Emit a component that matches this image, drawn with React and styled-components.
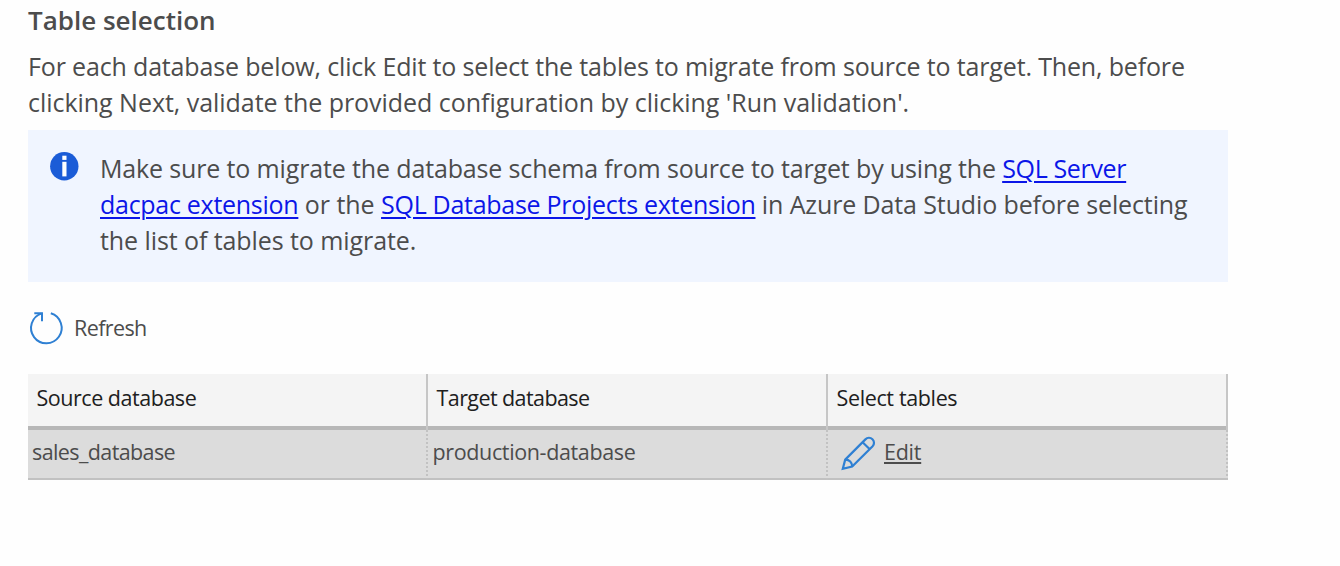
import React from "react";
import styled, { createGlobalStyle } from "styled-components";

const Global = createGlobalStyle`
  * { box-sizing: border-box; }
  body {
    margin: 0;
    background: #fefefe;
    color: #4c4c4c;
    font-family: "Open Sans", "Noto Sans", sans-serif;
  }
`;

const Page = styled.main`
  width: 1228px;
  height: 566px;
  padding: 2px 0 0 28px;
`;

const Heading = styled.h2`
  margin: 0;
  font-size: 26px;
  line-height: 36px;
  font-weight: 600;
  white-space: nowrap;
`;

const Description = styled.p`
  margin: 10px 0;
  font-size: 25px;
  line-height: 36px;
`;

const Line = styled.span`
  display: block;
  white-space: nowrap;
`;

const Run = styled.span`
  letter-spacing: ${(p) => p.$tracking || 0}px;
`;

const Link = styled.a`
  color: #0b16e8;
  letter-spacing: ${(p) => p.$tracking || 0}px;
  text-decoration: underline;
  text-decoration-thickness: 2px;
  text-underline-offset: 3px;
`;

const Note = styled.section`
  display: flex;
  align-items: flex-start;
  gap: 21px;
  height: 152px;
  padding: 20px 0 0 22px;
  background: #f0f5ff;
`;

const NoteIcon = styled.svg`
  flex: none;
  width: 29px;
  height: 29px;
  margin-top: 2px;
`;

const NoteText = styled.p`
  margin: 0;
  font-size: 25px;
  line-height: 36px;
`;

const RefreshButton = styled.button`
  display: flex;
  align-items: center;
  gap: 8px;
  height: 36px;
  margin: 28px 0 28px;
  padding: 0;
  border: 0;
  background: none;
  color: inherit;
  font: 21.5px/36px "Open Sans", "Noto Sans", sans-serif;
  letter-spacing: -0.6px;
`;

const RefreshIcon = styled.svg`
  width: 38px;
  height: 38px;
`;

const Grid = styled.div`
  display: grid;
  grid-template-columns: repeat(3, 400px);
  font-size: 21.5px;
`;

const HeaderCell = styled.div`
  height: 56px;
  padding: 6px 0 0 8.5px;
  line-height: 36px;
  color: #202020;
  background:
    linear-gradient(#b7b7b7, #b7b7b7) bottom / 100% 4px no-repeat,
    #f4f4f4;
  border-right: 2px solid #c6c6c6;
  letter-spacing: ${(p) => p.$tracking}px;
`;

const Cell = styled.div`
  display: flex;
  align-items: flex-start;
  height: 50px;
  padding: 4px 0 0 ${(p) => p.$inset || 4}px;
  line-height: 36px;
  background: #dcdcdc;
  box-shadow: inset 0 -2px #c1c1c1;
  border-right: 2px dotted #c2c2c2;
  letter-spacing: ${(p) => p.$tracking || 0}px;
`;

const PencilIcon = styled.svg`
  width: 36px;
  height: 36px;
  margin: 2px 8px 0 0;
`;

const EditLink = styled.a`
  color: inherit;
  letter-spacing: -0.25px;
  text-decoration: underline;
  text-decoration-thickness: 2px;
  text-underline-offset: 2px;
`;

const columns = [
  { title: "Source database", tracking: -0.47 },
  { title: "Target database", tracking: -0.58 },
  { title: "Select tables", tracking: -0.36 },
];

export default function App() {
  return (
    <>
      <Global />
      <Page>
        <Heading>Table selection</Heading>
        <Description>
          <Line>
            <Run $tracking={-0.155}>
              For each database below, click Edit to select the tables to migrate from source to target. Then, before
            </Run>
          </Line>
          <Line>
            <Run $tracking={-0.035}>
              clicking Next, validate the provided configuration by clicking 'Run validation'.
            </Run>
          </Line>
        </Description>
        <Note>
          <NoteIcon viewBox="0 0 29 29">
            <circle cx="14.3" cy="14.3" r="14.2" fill="#1b5cd7" />
            <rect x="12.3" y="3.7" width="4.2" height="4.2" fill="#fff" />
            <rect x="12.3" y="9.8" width="4.2" height="14.6" fill="#fff" />
          </NoteIcon>
          <NoteText>
            <Line>
              <Run $tracking={-0.144}>Make sure to migrate the database schema from source to target by using the </Run>
              <Link $tracking={-0.34}>SQL Server</Link>
            </Line>
            <Line>
              <Link $tracking={-0.28}>dacpac extension</Link>
              <Run $tracking={-0.04}> or the </Run>
              <Link $tracking={-0.28}>SQL Database Projects extension</Link>
              <Run $tracking={-0.12}> in Azure Data Studio before selecting</Run>
            </Line>
            <Line>
              <Run $tracking={-0.08}>the list of tables to migrate.</Run>
            </Line>
          </NoteText>
        </Note>
        <RefreshButton>
          <RefreshIcon viewBox="0 0 38 38" fill="none" stroke="#2f80d3" strokeWidth="2">
            <path d="M22.8 4.3A15.3 15.3 0 1 1 13.6 4.4" />
            <path d="M6.3 4.2H14V12.2" />
          </RefreshIcon>
          Refresh
        </RefreshButton>
        <Grid>
          {columns.map((c) => (
            <HeaderCell key={c.title} $tracking={c.tracking}>
              {c.title}
            </HeaderCell>
          ))}
          <Cell $tracking={-0.6}>sales_database</Cell>
          <Cell $inset={4.5} $tracking={-0.36}>production-database</Cell>
          <Cell $inset={12}>
            <PencilIcon viewBox="0 0 36 36" fill="none" stroke="#2f80d3" strokeWidth="2.2">
              <path d="M2.8 32.8L5.2 23.6L25.4 3.4A4.7 4.7 0 0 1 32.6 10.3L12.2 30.5Z" />
              <path d="M5.2 23.6A6.6 6.6 0 0 1 12.2 30.5M22.6 6.2L29.8 13.2" />
            </PencilIcon>
            <EditLink>Edit</EditLink>
          </Cell>
        </Grid>
      </Page>
    </>
  );
}
